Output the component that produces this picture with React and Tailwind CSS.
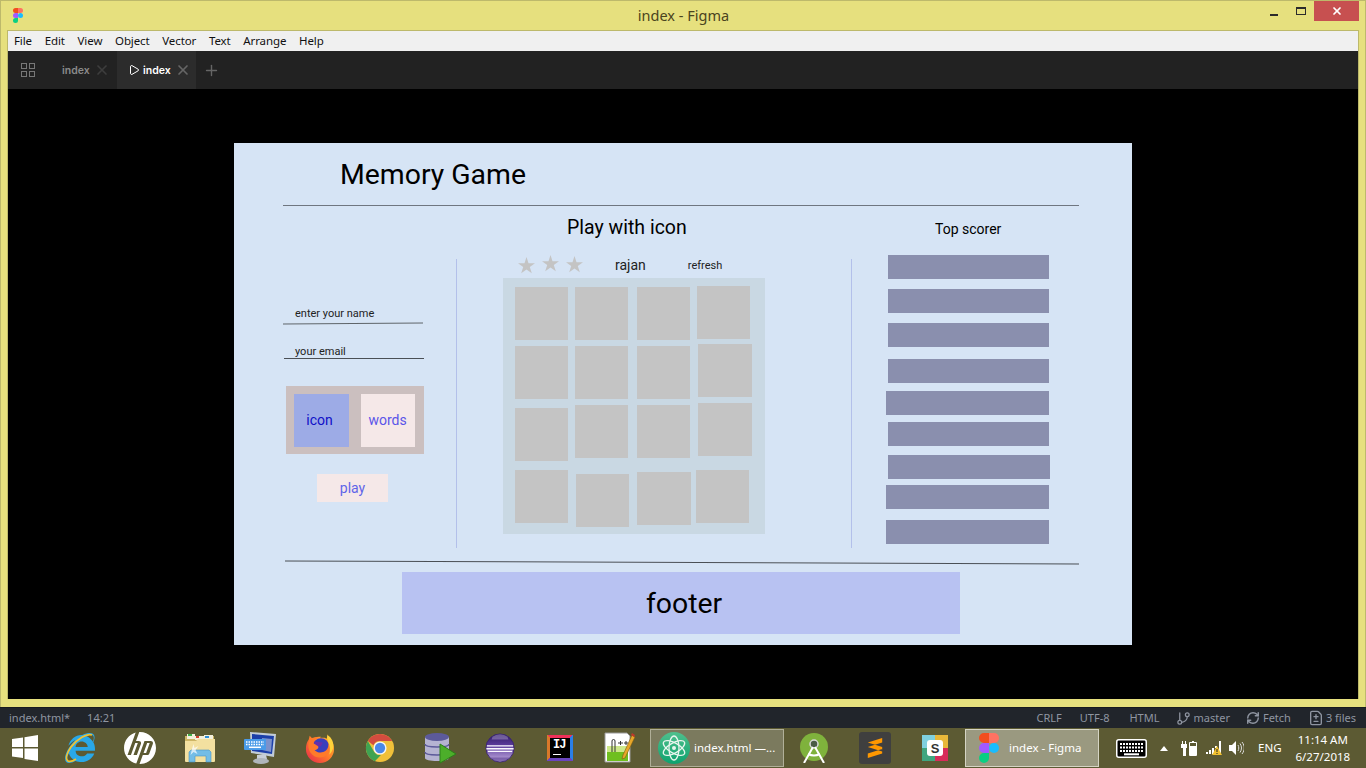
import React from 'react';
import { X, Plus, Play, GitBranch, RefreshCw, FileDiff } from 'lucide-react';
import { SiHp } from 'react-icons/si';
import { FaInternetExplorer } from 'react-icons/fa';

const uiFont = "font-['Noto_Sans','Open_Sans',sans-serif]";

const FigmaLogo = ({ className }) => (
  <svg viewBox="0 0 38 57" className={className}>
    <path fill="#1abcfe" d="M19 28.5a9.5 9.5 0 1 1 19 0 9.5 9.5 0 0 1-19 0z" />
    <path fill="#0acf83" d="M0 47.5A9.5 9.5 0 0 1 9.5 38H19v9.5a9.5 9.5 0 1 1-19 0z" />
    <path fill="#ff7262" d="M19 0v19h9.5a9.5 9.5 0 1 0 0-19H19z" />
    <path fill="#f24e1e" d="M0 9.5A9.5 9.5 0 0 0 9.5 19H19V0H9.5A9.5 9.5 0 0 0 0 9.5z" />
    <path fill="#a259ff" d="M0 28.5A9.5 9.5 0 0 0 9.5 38H19V19H9.5A9.5 9.5 0 0 0 0 28.5z" />
  </svg>
);

const WindowsLogo = () => (
  <svg viewBox="0 0 26 26" className="w-[26px] h-[26px]">
    <path fill="#fff" d="M0 4l11-1.500V12H0zM12.500 2.300L26 0v12H12.500zM0 13.500h11V23L0 21.500zM12.500 13.500H26V26l-13.500-2z" />
  </svg>
);

const IeIcon = () => (
  <div className="relative w-[30px] h-[30px] flex items-center justify-center">
    <FaInternetExplorer className="text-[#29a8e8] w-[30px] h-[30px]" />
    <svg viewBox="0 0 30 30" className="absolute inset-0 w-[30px] h-[30px]">
      <path fill="none" stroke="#f2c230" strokeWidth="1.800" d="M27 2C22 0 12 6 6 14 2 20 0 26 3 28c2 1 5 0 8-2" />
    </svg>
  </div>
);

const FolderIcon = () => (
  <svg viewBox="0 0 32 30" className="w-[32px] h-[30px]">
    <path fill="#cdb565" d="M1 3h29v8H1z" />
    <path fill="#f4f0dc" d="M3 1h8v5H3zM11 3h9v4h-9zM20 2h9v6h-9z" />
    <path fill="#3fae49" d="M4 1h4v2H4z" />
    <path fill="#d8412f" d="M12 3h3v2h-3z" />
    <path fill="#2f8fd8" d="M21 3h4v2h-4z" />
    <path fill="#f3e0a0" d="M1 8h11l2-2h17v22a1 1 0 0 1-1 1H2a1 1 0 0 1-1-1z" />
    <path fill="#74bde6" stroke="#4c93c4" strokeWidth=".6" d="M5 19l2-2h18l2 2v10h-5v-6H11v6H5z" />
    <path fill="#fff" d="M8 16l1.500-5 1 4 4-2-3 4 2 4-4-2-3 3z" opacity=".7" />
  </svg>
);

const MonitorIcon = () => (
  <svg viewBox="0 0 32 32" className="w-[32px] h-[32px]">
    <path fill="#c2ccd6" d="M6 0l26 2-2 23-23-4z" />
    <path fill="#1c3fa8" d="M8 2l22 2-2 18-20-3z" />
    <path fill="#dce4ee" d="M18 6l10 1-1 13-9-2z" opacity=".5" />
    <path fill="#c9cfd6" d="M13 23h9l1 4H13z" />
    <ellipse cx="17" cy="29" rx="8" ry="3" fill="#b0b6bb" />
    <rect x="0" y="7" width="22" height="11" rx="1" fill="#4a9be8" />
    <path stroke="#fff" strokeWidth="1.500" strokeDasharray="1.500 1" d="M2 10h18M2 12.500h18" />
    <path stroke="#fff" strokeWidth="1.500" d="M5 15.300h12" />
  </svg>
);

const FirefoxIcon = () => (
  <svg viewBox="0 0 32 32" className="w-[30px] h-[30px]">
    <defs>
      <linearGradient id="foxBody" x1="1" y1="0" x2="0" y2="1">
        <stop offset="0" stopColor="#ffc531" />
        <stop offset=".5" stopColor="#ff7a2a" />
        <stop offset="1" stopColor="#e5224f" />
      </linearGradient>
    </defs>
    <path fill="url(#foxBody)" d="M24 1c1 3 1 4 2 5 4 3 5 7 5 11a15 15 0 0 1-30 0c0-4 1-7 3-10l1-4 3 3c3-2 6-2 9-2-1 1-1 1 0 1 3 0 5 0 6 1 1-2 1-3 1-5z" />
    <circle cx="17" cy="14" r="8.500" fill="#3a3fbd" />
    <path fill="#6a2fa8" d="M10 9l9 1-2 4-6 1z" />
    <path fill="#ff7a2a" d="M5 7c3-2 6-3 9-2-2 1-5 3-5 6l5 3c1 2-1 4-4 4 3 3 8 4 12 1 2-2 3-4 3-7 2 3 2 8-1 11-5 5-14 4-18-2-3-4-3-10-1-14z" />
    <path fill="#ffd23a" d="M24 2c5 3 7 9 6 14-1 3-2 5-4 7 1-5 1-10-1-13-1-3-2-5-1-8z" />
  </svg>
);

const ChromeIcon = () => (
  <svg viewBox="0 0 32 32" className="w-[30px] h-[30px]">
    <circle cx="16" cy="16" r="15" fill="#f0c03a" />
    <path fill="#d34c3f" d="M3 8.500A15 15 0 0 1 29 8.500H16a7.500 7.500 0 0 0-7 4.500z" />
    <path fill="#3fa352" d="M3 8.500l6.500 11.200a7.500 7.500 0 0 0 7.500 3.800L10.500 30A15 15 0 0 1 3 8.500z" />
    <circle cx="16" cy="16" r="7" fill="#f5f5f5" />
    <circle cx="16" cy="16" r="5.500" fill="#4a88e8" />
  </svg>
);

const DbIcon = () => (
  <svg viewBox="0 0 32 32" className="w-[32px] h-[32px]">
    <path fill="#b5b3d2" d="M1 5h24v21c0 2-5 3-12 3S1 28 1 26z" />
    <ellipse cx="13" cy="5" rx="12" ry="4" fill="#5c5a9a" />
    <path fill="none" stroke="#5c5a9a" strokeWidth="1.500" d="M1 12c0 2 5 3 12 3s12-1 12-3M1 20c0 2 5 3 12 3s12-1 12-3" />
    <path fill="#4cae2a" stroke="#2d7f1a" d="M16 12l16 10-16 9z" />
  </svg>
);

const EclipseIcon = () => (
  <svg viewBox="0 0 32 32" className="w-[30px] h-[30px]">
    <defs>
      <linearGradient id="eclipseBall" x1="0" y1="0" x2="0" y2="1">
        <stop offset="0" stopColor="#2f1a63" />
        <stop offset=".4" stopColor="#5a3a9a" />
        <stop offset="1" stopColor="#c3aee0" />
      </linearGradient>
    </defs>
    <circle cx="16" cy="16" r="15" fill="url(#eclipseBall)" stroke="#3a2470" />
    <path fill="#d8cdec" d="M8 4a13 13 0 0 1 16 0l1 3H7z" opacity=".35" />
    <path fill="#fbf9ff" d="M2 13h28v1.500H2zM1.500 16h29v1.500h-29zM3 19h26v1.200H3z" />
    <path fill="#4b2f85" d="M6 26h20l-4 4H10z" opacity=".5" />
  </svg>
);

const IntellijIcon = () => (
  <div className="w-[26px] h-[26px] bg-[conic-gradient(from_315deg,#f0305a_0_25%,#2a7fe8_25%_50%,#6a45c0_50%_75%,#d9782a_75%_100%)] p-[3px] flex">
    <div className="flex-1 bg-black flex flex-col pl-[3px]">
      <span className="text-white text-[12px] font-bold leading-[13px] mt-[1px] font-['Liberation_Mono',monospace] tracking-[-1px]">IJ</span>
      <div className="w-[8px] h-[1px] bg-white mt-[2px]" />
    </div>
  </div>
);

const NotepadIcon = () => (
  <svg viewBox="0 0 32 32" className="w-[32px] h-[32px]">
    <path fill="#fff" stroke="#999" d="M1 1h22l3 3v26H1z" />
    <path fill="#6fbf1f" d="M3 20h21v9H3z" />
    <path fill="#cde88a" d="M3 14h21v6H3z" />
    <path fill="none" stroke="#333" strokeWidth="1" d="M8 20V9a1.500 1.500 0 0 1 3 0v11M14 11h5M16.500 9v4M20 11h4M22 9v4" />
    <path fill="#e8a72a" stroke="#7a5a10" strokeWidth=".6" d="M28 3l3 2-10 21-3 1 1-4z" />
    <path fill="#c0392b" d="M28 1l3 2-1 2-3-2z" />
  </svg>
);

const AtomIcon = () => (
  <svg viewBox="0 0 32 32" className="w-[32px] h-[32px]">
    <defs>
      <linearGradient id="atomBg" x1="0" y1="0" x2="0" y2="1">
        <stop offset="0" stopColor="#4fc08d" />
        <stop offset="1" stopColor="#0ea26f" />
      </linearGradient>
    </defs>
    <circle cx="16" cy="16" r="16" fill="url(#atomBg)" />
    <g fill="none" stroke="#e8f5ee" strokeWidth="1.300">
      <ellipse cx="16" cy="16" rx="12" ry="5" transform="rotate(30 16 16)" />
      <ellipse cx="16" cy="16" rx="12" ry="5" transform="rotate(-30 16 16)" />
      <ellipse cx="16" cy="16" rx="12" ry="5" transform="rotate(90 16 16)" />
    </g>
    <circle cx="16" cy="16" r="2" fill="#e8f5ee" />
  </svg>
);

const AndroidStudioIcon = () => (
  <svg viewBox="0 0 30 30" className="w-[30px] h-[30px]">
    <circle cx="14" cy="14" r="14" fill="#7fb23c" />
    <circle cx="14" cy="11" r="4" fill="#4a5a45" stroke="#d8d8d8" strokeWidth="1.500" />
    <path fill="none" stroke="#fff" strokeWidth="2" d="M13 14L4 30M15 14l9 16M8 21c4 2 8 2 12 0" />
  </svg>
);

const SublimeIcon = () => (
  <div className="w-[32px] h-[32px] rounded-[3px] bg-[#3f3f3f] flex items-center justify-center">
    <svg viewBox="0 0 20 22" className="w-[18px] h-[20px]">
      <path fill="#ff9800" d="M18 0v5L2 10V5zM2 10l16 5v-5L2 5zM18 12v5L2 22v-5z" />
    </svg>
  </div>
);

const SlackIcon = () => (
  <div className="w-[26px] h-[26px] relative bg-[conic-gradient(#e8b83a_0_25%,#d82c5a_25%_50%,#3fa67f_50%_75%,#7fd0e0_75%_100%)] flex items-center justify-center">
    <span className="w-[16px] h-[16px] bg-white rounded-[3px] flex items-center justify-center text-[13px] font-bold leading-none text-[#333] font-['Liberation_Sans',sans-serif]">S</span>
  </div>
);

const KeyboardIcon = () => (
  <svg viewBox="0 0 31 19" className="w-[31px] h-[19px]">
    <rect x=".75" y=".75" width="29.500" height="17.500" rx="2" fill="#000" stroke="#fff" strokeWidth="1.500" />
    <path stroke="#fff" strokeWidth="2" strokeDasharray="2 1" d="M4 5h23M4 8.500h23M4 12h23" />
    <path stroke="#fff" strokeWidth="2" d="M8 15.300h15" />
  </svg>
);

const TrayIcons = () => (
  <>
    <svg viewBox="0 0 8 5" className="w-[8px] h-[5px] ml-[13px] mr-[13px]">
      <path fill="#fff" d="M0 5l4-5 4 5z" />
    </svg>
    <svg viewBox="0 0 16 15" className="w-[16px] h-[15px]">
      <path fill="#fff" d="M1 0h1v3h2V0h1v3h1v4H5v8H2V7H0V3h1zM9 1h2V0h2v1h2a1 1 0 0 1 1 1v12a1 1 0 0 1-1 1H9a1 1 0 0 1-1-1V2a1 1 0 0 1 1-1z" />
      <path fill="#5c5a33" d="M9 2h6v3H9z" />
    </svg>
    <svg viewBox="0 0 16 14" className="w-[16px] h-[14px] ml-[9px]">
      <path fill="#fff" d="M0 11h2v2H0zM3 9h2v4H3zM6 7h2v6H6zM9 5h2v2H9zM13 0h2v13h-2z" />
      <path fill="#f2c230" d="M11 5l5 9H6z" />
      <path fill="#222" d="M10.500 8h1v3h-1zM10.500 12h1v1h-1z" />
    </svg>
    <svg viewBox="0 0 15 14" className="w-[15px] h-[14px] ml-[7px]">
      <path fill="#fff" d="M0 4h3l4-4v14l-4-4H0z" />
      <path fill="none" stroke="#ddd" d="M9 4c1 2 1 4 0 6M11 2.500c2 3 2 6 0 9M13 1c3 4 3 8 0 12" />
    </svg>
  </>
);

const RatingStar = ({ className }) => (
  <svg viewBox="0 0 17 17" className={`w-[17px] h-[17px] ${className}`}>
    <polygon fill="#c4c4c4" points="8.500,0 10.500,6.200 17,6.200 11.800,10.100 13.800,16.300 8.500,12.500 3.200,16.300 5.200,10.100 0,6.200 6.500,6.200" />
  </svg>
);

const tiles = [
  'mt-[1px]', 'mt-[1px]', 'mt-[1px]', 'ml-[1px]',
  'mt-[2px]', 'mt-[2px]', 'mt-[2px]', 'ml-[2px] w-[54px]',
  'mt-[5px]', 'mt-[2px]', 'mt-[2px]', 'ml-[2px] w-[54px]',
  '', 'ml-[1px] mt-[4px]', 'mt-[2px] w-[54px]', '',
];

const bars = [
  'ml-[36px] w-[161px]',
  'ml-[36px] w-[161px] mt-[10px]',
  'ml-[36px] w-[161px] mt-[10px]',
  'ml-[36px] w-[161px] mt-[12px]',
  'ml-[34px] w-[163px] mt-[8px]',
  'ml-[36px] w-[161px] mt-[7px]',
  'ml-[36px] w-[162px] mt-[9px]',
  'ml-[34px] w-[163px] mt-[6px]',
  'ml-[34px] w-[163px] mt-[11px]',
];

const Prototype = () => (
  <div className="w-[898px] h-[502px] bg-[#d6e4f5] flex flex-col font-['Roboto',sans-serif] text-black shrink-0">
    <div className="h-[62px] pl-[106px] pt-[2px] flex items-center">
      <h1 className="text-[28.400px] leading-[36px] font-normal">Memory Game</h1>
    </div>
    <div className="ml-[49px] w-[796px] h-px bg-[#6f7680]" />
    <div className="flex h-[356px] pl-[49px]">
      <div className="w-[173px] flex flex-col">
        <div className="mt-[101px] pl-[12px] text-[11px] leading-[14px] text-[#222]">enter your name</div>
        <div className="mt-[2px] w-[140px] h-px bg-[#5f656a] rotate-[-0.4deg]" />
        <div className="mt-[21px] pl-[12px] text-[11px] leading-[14px] text-[#222]">your email</div>
        <div className="-mt-[1px] ml-[1px] w-[140px] h-px bg-[#4a4f55]" />
        <div className="mt-[27px] ml-[3px] w-[138px] h-[68px] bg-[#cbbfbf] flex items-center pl-[8px] gap-[12px]">
          <div className="w-[55px] h-[53px] bg-[#9dabe6] text-[#1010c8] text-[14px] pr-[4px] flex items-center justify-center">icon</div>
          <div className="w-[54px] h-[53px] bg-[#f5e8e8] text-[#5a55e8] text-[14px] pr-[1px] flex items-center justify-center">words</div>
        </div>
        <div className="mt-[20px] ml-[34px] w-[71px] h-[28px] bg-[#f5e8e8] text-[#5f66e8] text-[14px] flex items-center justify-center">play</div>
      </div>
      <div className="w-px h-[289px] mt-[53px] bg-[#b3c0ea]" />
      <div className="w-[394px] flex flex-col">
        <h2 className="mt-[8px] pl-[110px] text-[19.500px] leading-[28px] font-normal">Play with icon</h2>
        <div className="h-[26px] mt-[10px] ml-[61px] flex items-center">
          <div className="flex gap-[7px]">
            <RatingStar className="mt-[1px]" />
            <RatingStar className="-mt-[1px]" />
            <RatingStar />
          </div>
          <span className="ml-[32px] text-[14px] leading-[20px] -mt-[1px] text-[#222]">rajan</span>
          <span className="ml-[42px] text-[11px] leading-[20px] mt-[1px] text-[#222]">refresh</span>
        </div>
        <div className="ml-[46px] w-[262px] h-[256px] bg-[#c9d8e3] pl-[12px] pt-[8px] grid grid-cols-[60px_62px_59px_56px] grid-rows-[58px_59px_67px_56px]">
          {tiles.map((c, i) => (
            <div key={i} className={`w-[53px] h-[53px] bg-[#c4c4c4] ${c}`} />
          ))}
        </div>
      </div>
      <div className="w-px h-[289px] mt-[53px] bg-[#b3c0ea]" />
      <div className="flex-1 flex flex-col">
        <div className="mt-[13px] pl-[83px] text-[14px] leading-[20px]">Top scorer</div>
        <div className="mt-[16px] flex flex-col">
          {bars.map((c, i) => (
            <div key={i} className={`h-[24px] bg-[#8a8fae] ${c}`} />
          ))}
        </div>
      </div>
    </div>
    <div className="ml-[51px] w-[794px] h-px bg-[#4a4f55] rotate-[0.22deg]" />
    <div className="mt-[9px] ml-[168px] w-[558px] h-[62px] bg-[#b8c2f2] flex items-center justify-center pl-[6px] pt-[2px] text-[28.400px]">footer</div>
  </div>
);

export default function App() {
  return (
    <div className={`w-[1366px] h-[768px] overflow-hidden flex flex-col ${uiFont}`}>
      <div className="h-[707px] bg-[#e6e07e] border-t border-x border-[#bdb96b] flex flex-col">
        <div className="h-[29px] flex items-start relative shrink-0">
          <FigmaLogo className="w-[10px] h-[15px] ml-[12px] mt-[7px]" />
          <div className="flex-1 text-center text-[14.500px] leading-[29px] text-[#4a4420] pl-[74px]">index - Figma</div>
          <div className="w-[8px] h-[2px] bg-[#2b2b2b] mt-[13px] mr-[18px]" />
          <div className="w-[10px] h-[8px] border border-t-2 border-[#2b2b2b] mt-[6px] mr-[8px]" />
          <div className="w-[45px] h-[20px] bg-[#c75050] flex items-center justify-center mr-[6px]">
            <X size={12} strokeWidth={3.500} className="text-white" />
          </div>
        </div>
        <div className="mx-[6px] flex-1 flex flex-col border-t border-x border-[#bdb96b] min-h-0">
          <div className="h-[20px] bg-[#f0f0f0] flex items-center pl-[6px] gap-[12.700px] text-[11.500px] tracking-[-0.1px] text-[#111] shrink-0">
            <span>File</span><span>Edit</span><span>View</span><span>Object</span><span>Vector</span><span>Text</span><span>Arrange</span><span>Help</span>
          </div>
          <div className="h-[38px] bg-[#222] flex items-stretch text-[10.500px] shrink-0 font-['Inter',sans-serif]">
            <div className="w-[40px] flex items-center justify-center">
              <div className="grid grid-cols-2 gap-[2px]">
                <div className="w-[6px] h-[6px] border border-[#777]" />
                <div className="w-[6px] h-[6px] border border-[#777]" />
                <div className="w-[6px] h-[6px] border border-[#777]" />
                <div className="w-[6px] h-[6px] border border-[#777]" />
              </div>
            </div>
            <div className="w-[69px] flex items-center pl-[14px] text-[#8a8a8a] font-semibold">
              <span className="mt-[1px]">index</span>
              <X size={16} strokeWidth={2.500} className="ml-[4px] text-[#3d3d3d]" />
            </div>
            <div className="w-[79px] bg-[#2c2c2c] flex items-center pl-[11px] text-white font-semibold">
              <Play size={12} className="mr-[3px]" />
              <span className="mt-[1px]">index</span>
              <X size={16} strokeWidth={2.500} className="ml-[4px] text-[#666]" />
            </div>
            <div className="flex items-center pl-[7px]">
              <Plus size={17} className="text-[#666]" />
            </div>
          </div>
          <div className="flex-1 min-h-0 bg-black flex items-center justify-center">
            <Prototype />
          </div>
        </div>
        <div className="h-[8px] shrink-0" />
      </div>
      <div className="h-[21px] bg-[#21252b] border-t border-[#181a1f] flex items-center text-[11px] text-[#8f95a1] shrink-0 pl-[9px]">
        <span>index.html*</span>
        <span className="ml-[17px]">14:21</span>
        <div className="ml-auto flex items-center pr-[10px]">
          <span>CRLF</span>
          <span className="ml-[18px]">UTF-8</span>
          <span className="ml-[20px]">HTML</span>
          <GitBranch size={15} className="ml-[17px] mr-[2px]" />
          <span>master</span>
          <RefreshCw size={14} strokeWidth={2.500} className="ml-[16px] mr-[3px]" />
          <span>Fetch</span>
          <FileDiff size={16} className="ml-[17px] mr-[2px]" />
          <span>3 files</span>
        </div>
      </div>
      <div className="h-[40px] bg-[#5c5a33] flex items-center text-white text-[11.500px] shrink-0">
        <div className="w-[50px] flex items-center justify-center"><WindowsLogo /></div>
        <div className="w-[60px] flex items-center justify-center"><IeIcon /></div>
        <div className="w-[60px] flex items-center justify-center"><SiHp className="w-[32px] h-[32px] text-white" /></div>
        <div className="w-[60px] flex items-center justify-center"><FolderIcon /></div>
        <div className="w-[60px] flex items-center justify-center"><MonitorIcon /></div>
        <div className="w-[60px] flex items-center justify-center"><FirefoxIcon /></div>
        <div className="w-[60px] flex items-center justify-center"><ChromeIcon /></div>
        <div className="w-[60px] flex items-center justify-center"><DbIcon /></div>
        <div className="w-[60px] flex items-center justify-center"><EclipseIcon /></div>
        <div className="w-[60px] flex items-center justify-center"><IntellijIcon /></div>
        <div className="w-[60px] flex items-center justify-center"><NotepadIcon /></div>
        <div className="w-[134px] h-[38px] bg-[#7b7a5e] border border-[#b0af98] flex items-center pl-[7px] gap-[4px]">
          <AtomIcon />
          <span className="whitespace-nowrap">index.html —...</span>
        </div>
        <div className="w-[61px] flex items-center justify-center"><AndroidStudioIcon /></div>
        <div className="w-[60px] flex items-center justify-center"><SublimeIcon /></div>
        <div className="w-[60px] flex items-center justify-center"><SlackIcon /></div>
        <div className="w-[134px] h-[38px] bg-[#9a9980] border border-[#d5d4c4] flex items-center pl-[13px] gap-[10px]">
          <FigmaLogo className="w-[20px] h-[30px]" />
          <span className="whitespace-nowrap">index - Figma</span>
        </div>
        <div className="ml-[17px]"><KeyboardIcon /></div>
        <TrayIcons />
        <span className="ml-[14px]">ENG</span>
        <div className="ml-[14px] flex flex-col items-center leading-[17px]">
          <span>11:14 AM</span>
          <span>6/27/2018</span>
        </div>
      </div>
    </div>
  );
}
